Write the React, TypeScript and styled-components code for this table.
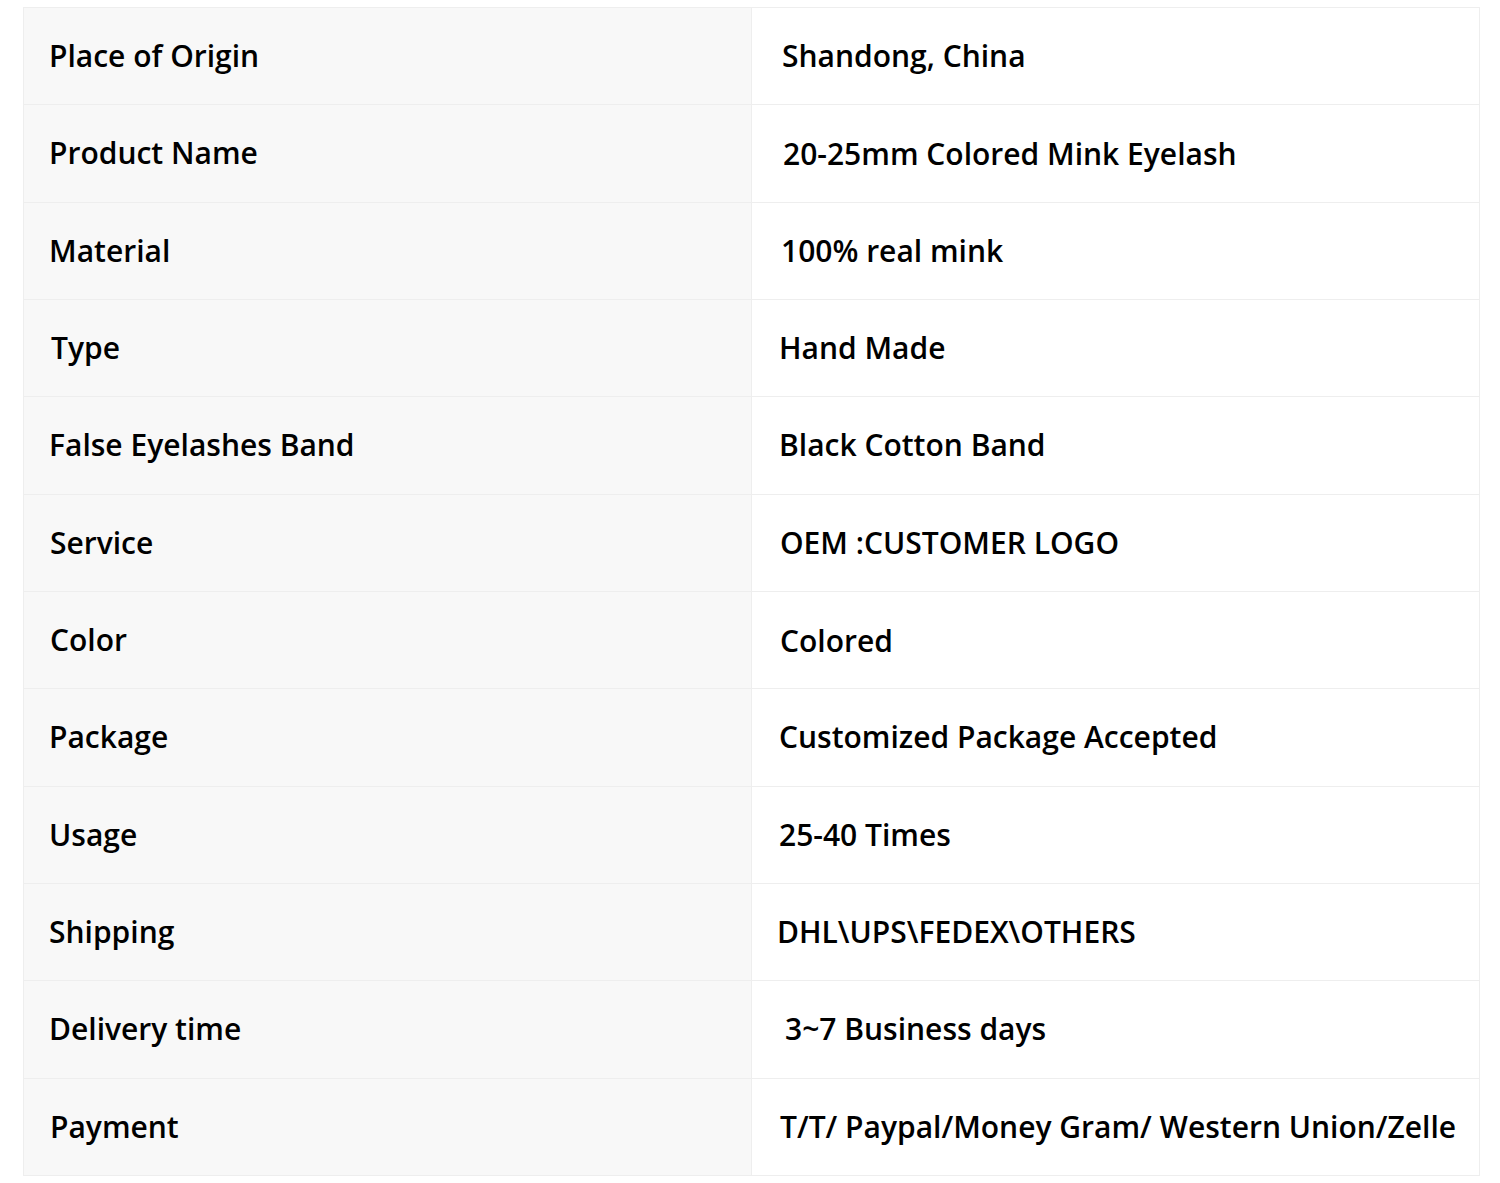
import React from "react";
import styled, { createGlobalStyle } from "styled-components";

const Global = createGlobalStyle`
  html, body { margin: 0; padding: 0; background: #ffffff; }
  body { font-family: "Open Sans", "Noto Sans", sans-serif; color: #000; }
`;

const Table = styled.div`
  margin: 7px 21px 0 23px;
  width: 1456px;
  display: flex;
  flex-direction: column;
  border-top: 1px solid #eeeeee;
  border-left: 1px solid #eeeeee;
`;

const Row = styled.div`
  display: grid;
  grid-template-columns: 728px 728px;
  height: 97.33px;
`;

const Cell = styled.div<{ $label?: boolean; $shift?: number; $dy?: number }>`
  display: flex;
  align-items: center;
  box-sizing: border-box;
  background: ${(p) => (p.$label ? "#f8f8f8" : "#ffffff")};
  border-right: 1px solid #eeeeee;
  border-bottom: 1px solid #eeeeee;
  padding-left: ${(p) => (p.$label ? 25 : 27) + (p.$shift ?? 0)}px;
  padding-top: ${(p) => (p.$dy ?? 0) * 2 - 4}px;
  font-size: 30px;
  font-weight: 600;
  line-height: 1;
  white-space: nowrap;
`;

const rows: [string, string, number, number, number, number][] = [
  ["Place of Origin", "Shandong, China", 0, 0, 3, 0],
  ["Product Name", "20-25mm Colored Mink Eyelash", 0, 0, 4, 3],
  ["Material", "100% real mink", 0, 2, 2, 0],
  ["Type", "Hand Made", 2, 2, 0, 0],
  ["False Eyelashes Band", "Black Cotton Band", 0, 0, 0, 0],
  ["Service", "OEM :CUSTOMER LOGO", 1, 1, 1, -1],
  ["Color", "Colored", 1, -3, 1, 3],
  ["Package", "Customized Package Accepted", 0, 0, 0, 0],
  ["Usage", "25-40 Times", 0, -1, 0, 0],
  ["Shipping", "DHL\\UPS\\FEDEX\\OTHERS", 0, 1, -2, -1],
  ["Delivery time", "3~7 Business days", 0, 0, 6, -1],
  ["Payment", "T/T/ Paypal/Money Gram/ Western Union/Zelle", 1, 0, 1, 0],
];

export default function App() {
  return (
    <>
      <Global />
      <Table>
        {rows.map(([label, value, lx, ly, vx, vy]) => (
          <Row key={label}>
            <Cell $label $shift={lx} $dy={ly}>
              {label}
            </Cell>
            <Cell $shift={vx} $dy={vy}>
              {value}
            </Cell>
          </Row>
        ))}
      </Table>
    </>
  );
}
